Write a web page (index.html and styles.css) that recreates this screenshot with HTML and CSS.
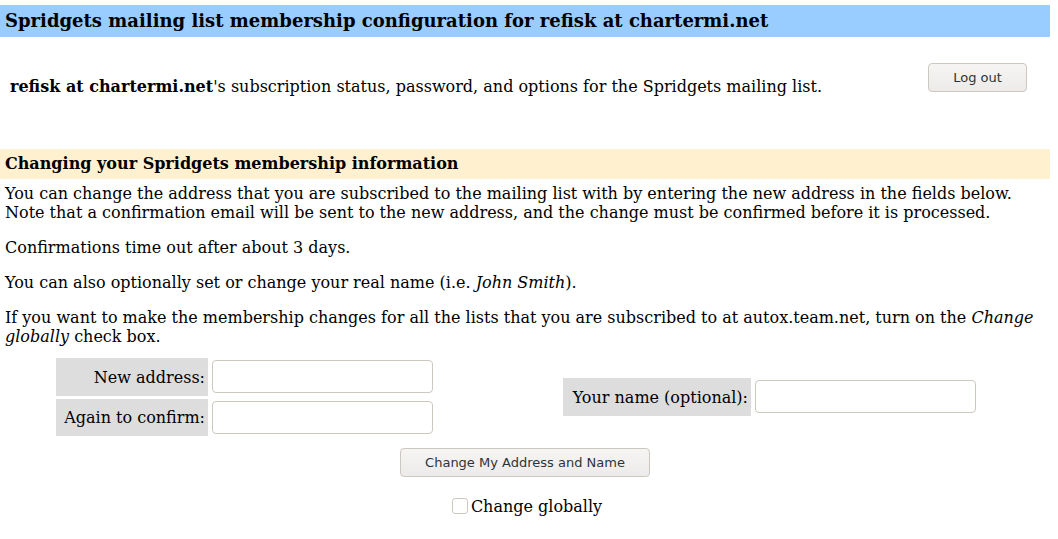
FILE: index.html
```html
<!DOCTYPE html>
<html>
<head>
<meta charset="utf-8">
<title>Spridgets membership configuration</title>
<link rel="stylesheet" href="styles.css">
</head>
<body>
<div class="page">
  <div class="title-bar">Spridgets mailing list membership configuration for refisk at chartermi.net</div>

  <div class="intro">
    <p class="intro-text"><b>refisk at chartermi.net</b>'s subscription status, password, and options for the Spridgets mailing list.</p>
    <button class="btn btn-logout" type="button">Log out</button>
  </div>

  <div class="section-bar">Changing your Spridgets membership information</div>

  <div class="section-body">
    <p>You can change the address that you are subscribed to the mailing list with by entering the new address in the fields below. Note that a confirmation email will be sent to the new address, and the change must be confirmed before it is processed.</p>
    <p>Confirmations time out after about 3 days.</p>
    <p>You can also optionally set or change your real name (i.e. <i>John Smith</i>).</p>
    <p>If you want to make the membership changes for all the lists that you are subscribed to at autox.team.net, turn on the <i>Change globally</i> check box.</p>
  </div>

  <div class="form-row">
    <div class="field-group">
      <div class="field">
        <div class="label">New address:</div>
        <input class="text-input" type="text">
      </div>
      <div class="field field-second">
        <div class="label">Again to confirm:</div>
        <input class="text-input" type="text">
      </div>
    </div>
    <div class="field-group">
      <div class="field field-name">
        <div class="label label-name">Your name (optional):</div>
        <input class="text-input" type="text">
      </div>
    </div>
  </div>

  <div class="submit-row">
    <button class="btn btn-change" type="button">Change My Address and Name</button>
  </div>
  <div class="check-row">
    <label class="check-label"><input class="checkbox" type="checkbox">Change globally</label>
  </div>
</div>
</body>
</html>
```

FILE: styles.css
```css
html, body {
  margin: 0;
  padding: 0;
  background: #ffffff;
}
body {
  font-family: "DejaVu Serif", serif;
  font-size: 16px;
  color: #000000;
}
.page {
  width: 1050px;
}
.title-bar {
  margin-top: 5px;
  height: 32px;
  line-height: 32px;
  padding: 0 5px;
  background: #99ccff;
  font-weight: bold;
  font-size: 18px;
  box-sizing: border-box;
}
.intro {
  display: flex;
  justify-content: space-between;
  align-items: flex-start;
  height: 112px;
}
.intro-text {
  margin: 39.5px 0 0 10px;
  line-height: 19px;
}
.btn {
  font-family: "DejaVu Sans", sans-serif;
  font-size: 13px;
  color: #2e3436;
  background: linear-gradient(#f6f5f4, #edebe9);
  border: 1px solid #cdc7c2;
  border-radius: 4px;
  height: 29px;
  padding: 0;
  box-sizing: border-box;
}
.btn-logout {
  width: 99px;
  margin: 26px 23px 0 0;
}
.section-bar {
  height: 30px;
  line-height: 30px;
  padding: 0 5px;
  background: #fff0d0;
  font-weight: bold;
}
.section-body {
  padding: 4.5px 5px 0 5px;
}
.section-body p {
  margin: 0 0 16px 0;
  line-height: 19px;
}
.section-body p:last-child {
  margin-bottom: 0;
}
.form-row {
  display: flex;
  align-items: center;
  gap: 130px;
  padding-left: 56px;
  margin-top: 12.5px;
}
.field-group {
  display: flex;
  flex-direction: column;
  gap: 3px;
}
.field {
  display: flex;
  align-items: flex-start;
  gap: 4px;
}
.label {
  width: 152px;
  height: 38px;
  background: #dddddd;
  display: flex;
  align-items: center;
  justify-content: flex-end;
  padding-right: 3px;
  box-sizing: border-box;
}
.field-second .label {
  height: 37px;
}
.label-name {
  width: 188px;
}
.text-input {
  width: 221px;
  height: 33px;
  margin-top: 2px;
  border: 1px solid #cdc7c2;
  border-radius: 4px;
  background: #ffffff;
  box-sizing: border-box;
  padding: 0 6px;
  font-family: "DejaVu Sans", sans-serif;
  font-size: 13px;
}
.submit-row {
  display: flex;
  justify-content: center;
  margin-top: 12px;
}
.btn-change {
  width: 250px;
}
.check-row {
  display: flex;
  justify-content: center;
  padding-left: 4px;
  margin-top: 20px;
}
.check-label {
  display: flex;
  align-items: flex-start;
  line-height: 19px;
}
.checkbox {
  appearance: none;
  -webkit-appearance: none;
  width: 16px;
  height: 16px;
  margin: 0.5px 3px 0 0;
  border: 1px solid #cdc7c2;
  border-radius: 3px;
  background: #ffffff;
  box-sizing: border-box;
}
```
